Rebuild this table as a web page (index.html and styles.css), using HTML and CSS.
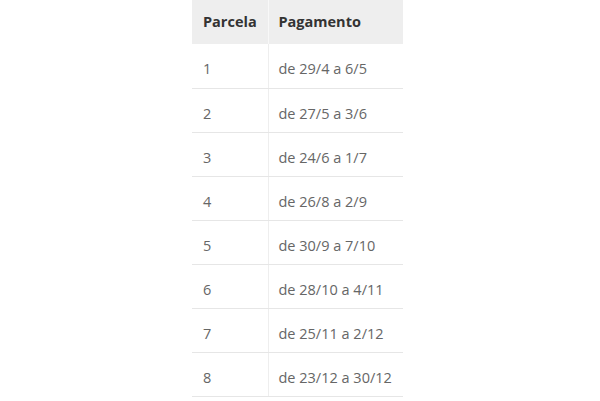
FILE: index.html
```html
<!DOCTYPE html>
<html lang="pt">
<head>
<meta charset="utf-8">
<link rel="stylesheet" href="styles.css">
</head>
<body>
<table class="tabela">
  <thead>
    <tr><th class="c1">Parcela</th><th class="c2">Pagamento</th></tr>
  </thead>
  <tbody>
    <tr><td class="c1">1</td><td class="c2">de 29/4 a 6/5</td></tr>
    <tr><td class="c1">2</td><td class="c2">de 27/5 a 3/6</td></tr>
    <tr><td class="c1">3</td><td class="c2">de 24/6 a 1/7</td></tr>
    <tr><td class="c1">4</td><td class="c2">de 26/8 a 2/9</td></tr>
    <tr><td class="c1">5</td><td class="c2">de 30/9 a 7/10</td></tr>
    <tr><td class="c1">6</td><td class="c2">de 28/10 a 4/11</td></tr>
    <tr><td class="c1">7</td><td class="c2">de 25/11 a 2/12</td></tr>
    <tr><td class="c1">8</td><td class="c2">de 23/12 a 30/12</td></tr>
  </tbody>
</table>
</body>
</html>
```
FILE: styles.css
```css
html, body {
  margin: 0;
  padding: 0;
  background: #ffffff;
}
body {
  font-family: "Open Sans", "Liberation Sans", sans-serif;
  font-size: 14.5px;
  line-height: 20px;
}
.tabela {
  border-collapse: collapse;
  margin-left: 192px;
  width: 211px;
  table-layout: fixed;
}
.tabela .c1 { width: 76px; }
.tabela th,
.tabela td {
  white-space: nowrap;
}
.tabela th {
  background: #eeeeee;
  color: #333333;
  font-weight: 700;
  text-align: left;
  height: 44px;
  box-sizing: border-box;
  padding: 12px 10px 12px 11px;
}
.tabela th.c2 {
  padding-left: 10px;
}
.tabela th.c1 {
  border-right: 1px solid #f8f8f8;
}
.tabela td {
  color: #666666;
  height: 44px;
  box-sizing: border-box;
  padding: 15px 10px 8px 11px;
  border-bottom: 1px solid #e6e6e6;
  vertical-align: top;
}
.tabela td.c2 {
  padding-left: 10px;
}
.tabela td.c1 {
  border-right: 1px solid #eeeeee;
}
```
